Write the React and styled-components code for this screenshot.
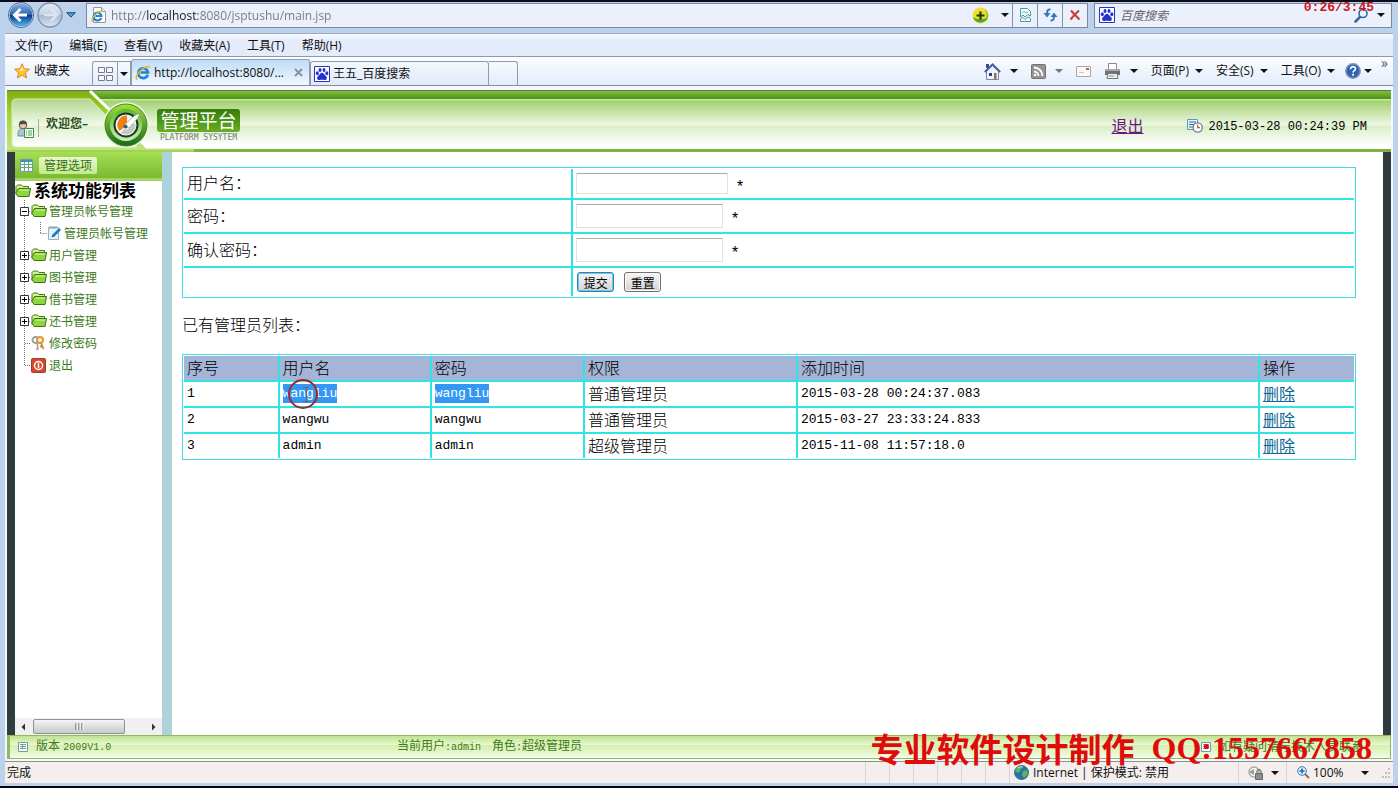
import styled, { createGlobalStyle, css } from "styled-components";

const menus = ["文件(F)", "编辑(E)", "查看(V)", "收藏夹(A)", "工具(T)", "帮助(H)"];
const commands = ["页面(P)", "安全(S)", "工具(O)"];
const folders = ["用户管理", "图书管理", "借书管理", "还书管理"];
const admins = [
  { id: 1, name: "wangliu", role: "普通管理员", added: "2015-03-28 00:24:37.083", selected: true },
  { id: 2, name: "wangwu", role: "普通管理员", added: "2015-03-27 23:33:24.833" },
  { id: 3, name: "admin", role: "超级管理员", added: "2015-11-08 11:57:18.0" },
];

export default function App() {
  return (
    <Window>
      <GlobalStyle />
      <AddressRow>
        <NavButtons>
          <IconButton aria-label="后退">
            <BackIcon />
          </IconButton>
          <IconButton aria-label="前进">
            <ForwardIcon />
          </IconButton>
          <IconButton aria-label="最近浏览的页面">
            <svg width="10" height="6" viewBox="0 0 10 6">
              <path d="M.7.7h8.6L5 5.2z" fill="#4f9bd0" stroke="#174d7e" />
            </svg>
          </IconButton>
        </NavButtons>
        <AddressBox>
          <PageIcon />
          <AddressInput aria-label="地址" defaultValue="http://localhost:8080/jsptushu/main.jsp" />
          <BoxButton aria-label="添加" $width={36}>
            <PlusBallIcon />
          </BoxButton>
          <BoxButton aria-label="地址列表" $width={14}>
            <Caret />
          </BoxButton>
          <BoxButton aria-label="兼容性视图" $width={25} $divided>
            <BrokenPageIcon />
          </BoxButton>
          <BoxButton aria-label="刷新" $width={25} $divided>
            <RefreshIcon />
          </BoxButton>
          <BoxButton aria-label="停止" $width={25} $divided>
            <svg width="12" height="12" viewBox="0 0 12 12">
              <path d="M2 1.5Q5 5 10.5 10.5M10 1.5Q5 6 1.5 10.5" fill="none" stroke="#c8413f" strokeWidth="2.2" />
            </svg>
          </BoxButton>
        </AddressBox>
        <SearchBox>
          <PawIcon />
          <SearchInput aria-label="搜索" placeholder="百度搜索" />
          <BoxButton aria-label="搜索" $width={20}>
            <svg width="15" height="15" viewBox="0 0 15 15">
              <path d="M6 9 1.5 13.5" stroke="#35669f" strokeWidth="2.5" strokeLinecap="round" />
              <circle cx="9" cy="5.5" r="4" fill="#eaf4fc" stroke="#35669f" strokeWidth="1.6" />
            </svg>
          </BoxButton>
          <BoxButton aria-label="搜索选项" $width={20}>
            <Caret />
          </BoxButton>
        </SearchBox>
        <Timer>0:26/3:45</Timer>
      </AddressRow>

      <Chrome>
        <MenuBar>
          {menus.map((menu) => (
            <TextButton key={menu}>{menu}</TextButton>
          ))}
        </MenuBar>
        <TabBar>
          <Favorites>
            <StarIcon />
            收藏夹
          </Favorites>
          <QuickTabs aria-label="快速导航选项卡">
            <svg width="15" height="14" viewBox="0 0 15 14">
              <path d="M.5.5h6v5h-6zM8.5.5h6v5h-6zM.5 8.5h6v5h-6zM8.5 8.5h6v5h-6z" fill="#f6f8fc" stroke="#737b8d" />
            </svg>
          </QuickTabs>
          <TabList aria-label="选项卡列表">
            <Caret />
          </TabList>
          <Tab $active>
            <IeIcon />
            <TabTitle>http://localhost:8080/...</TabTitle>
            <svg width="9" height="9" viewBox="0 0 9 9">
              <path d="m1 1 7 7M8 1 1 8" stroke="#8b8f96" strokeWidth="1.8" />
            </svg>
          </Tab>
          <Tab>
            <PawIcon />
            <TabTitle>王五_百度搜索</TabTitle>
          </Tab>
          <NewTab aria-label="新选项卡" />
          <CommandBar>
            <SplitButton aria-label="主页">
              <HomeIcon />
              <Caret />
            </SplitButton>
            <SplitButton aria-label="源">
              <RssIcon />
              <Caret $muted />
            </SplitButton>
            <IconButton aria-label="阅读邮件">
              <MailIcon />
            </IconButton>
            <SplitButton aria-label="打印">
              <PrinterIcon />
              <Caret />
            </SplitButton>
            {commands.map((command) => (
              <CommandButton key={command}>
                {command}
                <Caret />
              </CommandButton>
            ))}
            <HelpButton aria-label="帮助">
              <HelpIcon />
              <Caret />
            </HelpButton>
            <More aria-label="更多">»</More>
          </CommandBar>
        </TabBar>
      </Chrome>

      <Page>
        <Banner>
          <BannerArt />
          <Welcome>
            <UserIcon />
            <WelcomeText>欢迎您–</WelcomeText>
          </Welcome>
          <Brand>
            <BrandName>管理平台</BrandName>
            <BrandSub>PLATFORM SYSYTEM</BrandSub>
          </Brand>
          <Logout href="#logout">退出</Logout>
          <ClockIcon />
          <Clock>2015-03-28 00:24:39 PM</Clock>
        </Banner>

        <Body>
          <Sidebar>
            <SideHeader>
              <GridIcon />
              <SideBadge>管理选项</SideBadge>
            </SideHeader>
            <Tree>
              <TreeTitle>
                <FolderIcon />
                系统功能列表
              </TreeTitle>
              <TreeRow>
                <Branch toggle="-" />
                <FolderIcon />
                <TreeLink href="#admin">管理员帐号管理</TreeLink>
              </TreeRow>
              <TreeRow>
                <Branch line />
                <svg width="16" height="22" viewBox="0 0 16 22">
                  <path d="M9.5 0v11M9.5 11.5H16" stroke="#777" strokeDasharray="1 1" />
                </svg>
                <NoteIcon />
                <TreeLink href="#accounts">管理员帐号管理</TreeLink>
              </TreeRow>
              {folders.map((folder) => (
                <TreeRow key={folder}>
                  <Branch toggle="+" />
                  <FolderIcon />
                  <TreeLink href="#folder">{folder}</TreeLink>
                </TreeRow>
              ))}
              <TreeRow>
                <Branch />
                <KeysIcon />
                <TreeLink href="#password">修改密码</TreeLink>
              </TreeRow>
              <TreeRow>
                <Branch last />
                <PowerIcon />
                <TreeLink href="#logout">退出</TreeLink>
              </TreeRow>
            </Tree>
            <ScrollBar>
              <svg width="18" height="16" viewBox="0 0 18 16">
                <path d="M10 4.5v7L6.5 8z" fill="#333" />
              </svg>
              <ScrollThumb>
                <svg width="9" height="7" viewBox="0 0 9 7">
                  <path d="M1 0v7M4 0v7M7 0v7" stroke="#555" />
                  <path d="M2 0v7M5 0v7M8 0v7" stroke="#fff" />
                </svg>
              </ScrollThumb>
              <ScrollEnd width="17" height="16" viewBox="0 0 17 16">
                <path d="M7 4.5v7L10.5 8z" fill="#333" />
              </ScrollEnd>
            </ScrollBar>
          </Sidebar>

          <Content>
            <Form onSubmit={(event) => event.preventDefault()}>
              <Frame>
                <Grid>
                  <tbody>
                    <tr>
                      <FormCell $label $height={29}>
                        <label htmlFor="username">用户名：</label>
                      </FormCell>
                      <FormCell>
                        <FieldRow>
                          <TextField id="username" type="text" $width={152} $height={21} />
                          <Star>*</Star>
                        </FieldRow>
                      </FormCell>
                    </tr>
                    <tr>
                      <FormCell $label $height={34}>
                        <label htmlFor="password">密码：</label>
                      </FormCell>
                      <FormCell>
                        <FieldRow>
                          <TextField id="password" type="password" $width={147} $height={24} />
                          <Star>*</Star>
                        </FieldRow>
                      </FormCell>
                    </tr>
                    <tr>
                      <FormCell $label $height={34}>
                        <label htmlFor="confirm">确认密码：</label>
                      </FormCell>
                      <FormCell>
                        <FieldRow>
                          <TextField id="confirm" type="password" $width={147} $height={24} />
                          <Star>*</Star>
                        </FieldRow>
                      </FormCell>
                    </tr>
                    <tr>
                      <FormCell $label $height={30} />
                      <FormCell>
                        <FormButtons>
                          <FormButton type="submit" $primary>
                            提交
                          </FormButton>
                          <FormButton type="reset">重置</FormButton>
                        </FormButtons>
                      </FormCell>
                    </tr>
                  </tbody>
                </Grid>
              </Frame>
            </Form>

            <ListTitle>已有管理员列表：</ListTitle>

            <Frame>
              <Grid>
                <colgroup>
                  <Col $share={8} />
                  <Col $share={13} />
                  <Col $share={13.1} />
                  <Col $share={18.2} />
                  <Col $share={39.5} />
                  <Col $share={8.2} />
                </colgroup>
                <thead>
                  <tr>
                    <HeadCell>序号</HeadCell>
                    <HeadCell>用户名</HeadCell>
                    <HeadCell>密码</HeadCell>
                    <HeadCell>权限</HeadCell>
                    <HeadCell>添加时间</HeadCell>
                    <HeadCell>操作</HeadCell>
                  </tr>
                </thead>
                <tbody>
                  {admins.map((admin) => (
                    <tr key={admin.id}>
                      <Cell $mono>{admin.id}</Cell>
                      <Cell $mono>
                        <Value $selected={admin.selected}>{admin.name}</Value>
                        {admin.selected && <Pointer />}
                      </Cell>
                      <Cell $mono>
                        <Value $selected={admin.selected}>{admin.name}</Value>
                      </Cell>
                      <Cell>{admin.role}</Cell>
                      <Cell $mono>{admin.added}</Cell>
                      <Cell>
                        <DeleteLink href="#delete">删除</DeleteLink>
                      </Cell>
                    </tr>
                  ))}
                </tbody>
              </Grid>
            </Frame>
          </Content>
        </Body>

        <Footer>
          <FooterPart>
            <SheetIcon />
            <span>
              版本 <Small>2009V1.0</Small>
            </span>
          </FooterPart>
          <FooterUser>
            <span>
              当前用户<Small>:admin</Small>
            </span>
            <span>
              角色<Small>:</Small>超级管理员
            </span>
          </FooterUser>
          <FooterPart $end>
            <SheetIcon />
            如有疑问请与技术人员联系
          </FooterPart>
        </Footer>
      </Page>

      <StatusBar>
        <StatusText>完成</StatusText>
        <Pane />
        <Pane />
        <Pane />
        <Pane />
        <Pane />
        <Pane />
        <ZonePane>
          <GlobeIcon />
          Internet | 保护模式: 禁用
        </ZonePane>
        <LockPane>
          <LockIcon />
          <Caret />
        </LockPane>
        <ZoomPane>
          <ZoomIcon />
          <ZoomValue>100%</ZoomValue>
          <Caret />
          <Grip />
        </ZoomPane>
        <Watermark>
          <span>专业软件设计制作</span>
          <WatermarkNumber>QQ:1557667858</WatermarkNumber>
        </Watermark>
      </StatusBar>
    </Window>
  );
}

function BackIcon() {
  return (
    <svg width="26" height="26" viewBox="0 0 26 26">
      <defs>
        <linearGradient id="back" x2="0" y2="1">
          <stop offset="0" stopColor="#8db4e0" />
          <stop offset=".48" stopColor="#2d66b4" />
          <stop offset=".52" stopColor="#0c3c8c" />
          <stop offset="1" stopColor="#4fc0f4" />
        </linearGradient>
      </defs>
      <circle cx="13" cy="13" r="12" fill="url(#back)" stroke="#e9f3fc" />
      <circle cx="13" cy="13" r="12.5" fill="none" stroke="#49658f" />
      <path d="M12.5 7 6.5 13l6 6M7 13h12" fill="none" stroke="#fff" strokeWidth="3" />
    </svg>
  );
}

function ForwardIcon() {
  return (
    <svg width="26" height="26" viewBox="0 0 26 26">
      <defs>
        <linearGradient id="forward" x2="0" y2="1">
          <stop offset="0" stopColor="#e3ebf5" />
          <stop offset=".5" stopColor="#c3d1e2" />
          <stop offset=".52" stopColor="#a6b9d0" />
          <stop offset="1" stopColor="#dde9f5" />
        </linearGradient>
      </defs>
      <circle cx="13" cy="13" r="12" fill="url(#forward)" stroke="#8192ab" strokeWidth="1.3" />
      <path d="m14 7 6 6-6 6M19 13H7" fill="none" stroke="#dbe6f2" strokeWidth="2.5" />
    </svg>
  );
}

function IeMark() {
  return (
    <>
      <path d="M12.8 9.8A4.9 4.9 0 1 1 13 7.5H5.5" fill="none" stroke="#2283cf" strokeWidth="2.7" />
      <path d="M2.5 14.5C-.5 14 2 8 7 4.3c4-3 8-4 7.6-1.3" fill="none" stroke="#e8b52f" strokeWidth="1.5" />
    </>
  );
}

function IeIcon() {
  return (
    <svg width="16" height="16" viewBox="0 0 16 16">
      <IeMark />
    </svg>
  );
}

function PageIcon() {
  return (
    <svg width="16" height="16" viewBox="0 0 16 16">
      <path d="M2.5.5h8l4 4v11h-12z" fill="#fff" stroke="#9a9a8e" />
      <path d="M10.5.5v4h4" fill="#e8e8e0" stroke="#9a9a8e" />
      <g transform="translate(0 3) scale(.8)">
        <IeMark />
      </g>
    </svg>
  );
}

function PlusBallIcon() {
  return (
    <svg width="17" height="17" viewBox="0 0 17 17">
      <circle cx="8.5" cy="8.5" r="8" fill="#f0e02a" />
      <path d="M1 10c2 7 12 8 15 0-4 3-11 3-15 0z" fill="#4ea832" />
      <path d="M13 2c4 4 4 9 1 12 1-4 1-8-1-12z" fill="#76bd3a" />
      <path d="M8.5 4.5v8M4.5 8.5h8" stroke="#243a12" strokeWidth="2.2" />
    </svg>
  );
}

function BrokenPageIcon() {
  return (
    <svg width="13" height="16" viewBox="0 0 13 16">
      <path d="M1.5 10V1.5h7l3 3V9L9 7.5 6 10 4 8z" fill="#f3faf9" stroke="#4d9da2" />
      <path d="M1.5 12 4 10.5l2 2L9 10l2.5 1.5v3h-10z" fill="#f3faf9" stroke="#4d9da2" />
      <path d="m3 6 2-2 2 2 2-1" fill="none" stroke="#75b9b4" />
    </svg>
  );
}

function RefreshIcon() {
  return (
    <svg width="15" height="14" viewBox="0 0 15 14">
      <path d="M.5 5h7L4 9.5zM7.5 9h7L11 4.5z" fill="#3479bd" />
      <path d="M7.5 1.5C4.500 1 4 3 4 6M7.5 12.5c3 .5 3.5-1.5 3.5-4.5" fill="none" stroke="#3479bd" strokeWidth="2" />
    </svg>
  );
}

function PawIcon() {
  return (
    <svg width="16" height="16" viewBox="0 0 16 16">
      <path d="M.5.5h15v15H.5z" fill="#fff" stroke="#2632c8" />
      <g fill="#2632d0">
        <ellipse cx="3.3" cy="7.3" rx="1.5" ry="2" />
        <ellipse cx="6" cy="4" rx="1.5" ry="2.1" />
        <ellipse cx="10" cy="4" rx="1.5" ry="2.1" />
        <ellipse cx="12.8" cy="7.3" rx="1.5" ry="2" />
        <path d="M8 6.8c1.6 0 2 1.5 3.4 2.7 2.7 2.3 1.2 4.9-1 4.5-1.7-.3-3.2-.3-4.8 0-2.2.4-3.7-2.2-1-4.5C6 8.3 6.4 6.8 8 6.8z" />
      </g>
    </svg>
  );
}

function StarIcon() {
  return (
    <svg width="16" height="16" viewBox="0 0 16 16">
      <path d="m8 .8 2.1 4.9 5.3.5-4 3.5 1.2 5.2L8 12.2l-4.6 2.7 1.2-5.2-4-3.5 5.3-.5z" fill="#fcc52c" stroke="#d98a1a" />
      <path d="m8 3 1.3 3.5 3.5.3-7.5 1.4z" fill="#fdeb9c" />
    </svg>
  );
}

function HomeIcon() {
  return (
    <svg width="17" height="17" viewBox="0 0 17 17">
      <path d="M2.5 8v8.5h12V8l-6-5.5z" fill="#f2f2f6" stroke="#7b89a6" />
      <path d="M2 1h3v4H2z" fill="#3a4a8e" />
      <path d="m.8 9 7.7-7.5L16.2 9" fill="none" stroke="#4462a0" strokeWidth="2" />
      <path d="M5 10h3v3H5z" fill="#2b3c92" />
      <path d="M10 10h2.5v6H10z" fill="#8d6f62" />
    </svg>
  );
}

function RssIcon() {
  return (
    <svg width="15" height="15" viewBox="0 0 15 15">
      <rect x=".5" y=".5" width="14" height="14" rx="1" fill="#949494" stroke="#737373" />
      <path d="M3 7.5A4.5 4.5 0 0 1 7.5 12M3 3.5A8.5 8.5 0 0 1 11.5 12" fill="none" stroke="#fff" strokeWidth="1.8" />
      <circle cx="4" cy="11" r="1.3" fill="#fff" />
    </svg>
  );
}

function MailIcon() {
  return (
    <svg width="15" height="11" viewBox="0 0 15 11">
      <path d="M.5.5h14v10H.5z" fill="#fbfaf8" stroke="#a8a8ac" />
      <path d="M10 3h3" stroke="#cf5a48" strokeWidth="2" />
      <path d="M3 6.5h5" stroke="#c9c9cc" />
    </svg>
  );
}

function PrinterIcon() {
  return (
    <svg width="17" height="16" viewBox="0 0 17 16">
      <path d="M4.5.5h8v6h-8z" fill="#fff" stroke="#8b8b8b" />
      <path d="M1 6h15v6H1z" fill="#6d7075" />
      <path d="M1 6h15v2H1z" fill="#a4a7ab" />
      <path d="M4 10.5h9l1 5H3z" fill="#e9f2ec" stroke="#777" />
      <path d="M5 13h5" stroke="#5ea0c4" />
    </svg>
  );
}

function HelpIcon() {
  return (
    <svg width="16" height="16" viewBox="0 0 16 16">
      <circle cx="8" cy="8" r="7.2" fill="#2e62b4" stroke="#8295b4" strokeWidth="1.5" />
      <path d="M5.5 6.2C5.5 2.8 10.7 3 10.5 6c-.1 1.7-2.4 1.7-2.4 3.4M8.1 10.8v2" fill="none" stroke="#fff" strokeWidth="1.7" />
    </svg>
  );
}

function BannerArt() {
  return (
    <Art width="190" height="62" viewBox="0 0 190 62">
      <defs>
        <linearGradient id="lime" x2="0" y2="1">
          <stop offset="0" stopColor="#7fae0c" />
          <stop offset=".4" stopColor="#a4d636" />
          <stop offset="1" stopColor="#c2e584" />
        </linearGradient>
        <linearGradient id="card" x2="0" y2="1">
          <stop offset="0" stopColor="#b1d68e" />
          <stop offset=".55" stopColor="#f3faeb" />
          <stop offset=".56" stopColor="#e0f1ce" />
          <stop offset="1" stopColor="#fff" />
        </linearGradient>
        <linearGradient id="ring" x2="0" y2="1">
          <stop offset="0" stopColor="#a4e03a" />
          <stop offset="1" stopColor="#17691f" />
        </linearGradient>
        <linearGradient id="dial" x2="0" y2="1">
          <stop offset="0" stopColor="#5eb52c" />
          <stop offset="1" stopColor="#d3eeb0" />
        </linearGradient>
      </defs>
      <path d="M0 1h82l34 33 23 24h48v4H0z" fill="url(#lime)" />
      <path d="M9 9h74l47 48H9q-4 0-4-4V13q0-4 4-4z" fill="url(#card)" stroke="#d6edb2" />
      <path d="m83 1 29 28M133 50l7 7h47" fill="none" stroke="#fff" strokeWidth="3" />
      <path d="M0 61h187" stroke="#86bd38" />
      <circle cx="119" cy="35" r="23" fill="#edf6df" />
      <circle cx="119" cy="35" r="21" fill="url(#ring)" stroke="#3c8a20" />
      <circle cx="119" cy="35" r="16" fill="url(#dial)" />
      <circle cx="119" cy="35" r="12.5" fill="#123c2c" />
      <circle cx="119" cy="35" r="10.5" fill="#fbfaf2" />
      <path d="M120 35v-9.5a9.5 9.5 0 0 0-7.5 15.500z" fill="#f57c14" />
      <path d="M114 43a9.500 9.500 0 0 0 14.500-9h-4.500a5 5 0 0 1-7 5z" fill="#c4c9c6" />
      <path d="m116 36 11-10 6-3-2 5-9 10z" fill="#fff" stroke="#567566" strokeWidth=".5" />
      <circle cx="118.5" cy="36.5" r="2" fill="#33655a" />
    </Art>
  );
}

function UserIcon() {
  return (
    <svg width="23" height="20" viewBox="0 0 23 20">
      <path d="M1 15q0-6 6-6t6 6v2H1z" fill="#a9c6d8" stroke="#6d8fa3" />
      <circle cx="6" cy="6" r="3.8" fill="#efc79e" stroke="#6e5a49" />
      <path d="M2 6q0-4.5 4-4.5T10 6Q7 4 2 6z" fill="#4b4b4b" />
      <path d="M7.5 9.5h9v9h-9z" fill="#f6fff2" stroke="#3c8b45" />
      <path d="M9 12h1M11 12h4M9 14h1M11 14h4M9 16h1M11 16h4" stroke="#55a25b" />
      <path d="M21.5 0v18" stroke="#96b781" />
    </svg>
  );
}

function ClockIcon() {
  return (
    <svg width="16" height="15" viewBox="0 0 16 15">
      <path d="M.5 1.5h10v10H.5z" fill="#e4f3fa" stroke="#5b9cb5" />
      <path d="M2 4h7M2 6.5h5M2 9h4" stroke="#35708e" />
      <circle cx="10.7" cy="9.5" r="4.6" fill="#fff" stroke="#68819d" strokeWidth="1.3" />
      <path d="M10.7 6.5v3.2H13" fill="none" stroke="#c6543f" strokeWidth="1.2" />
    </svg>
  );
}

function GridIcon() {
  return (
    <svg width="13" height="13" viewBox="0 0 13 13">
      <path d="M.5.5h12v12H.5z" fill="#f4fcff" stroke="#6c9cab" />
      <path d="M1 2h11" stroke="#3e99a5" strokeWidth="2" />
      <path d="M1 5.5h11M1 8.5h11M4.5 3v9M8.5 3v9" stroke="#6ea67c" />
    </svg>
  );
}

function SheetIcon() {
  return (
    <svg width="10" height="10" viewBox="0 0 10 10">
      <path d="M.5.5h9v9h-9z" fill="#fdfff8" stroke="#6f9bb0" />
      <path d="M2 2.5h6M2 4.5h6M2 6.5h6M4.5 3v4" stroke="#6ea67c" />
    </svg>
  );
}

function FolderIcon() {
  return (
    <svg width="16" height="14" viewBox="0 0 16 14">
      <path d="M1 10.5v-8L2.5 1h4L8 2.5h5.5v3" fill="#d7f08f" stroke="#3f7a17" />
      <path d="M3.5 4.5h12L14 12.5H3L.8 9z" fill="#8ed63c" stroke="#3a7515" />
      <path d="M4.5 6H14" stroke="#d9f6a5" />
    </svg>
  );
}

function Branch({ toggle, line, last }) {
  return (
    <svg width="11" height="22" viewBox="0 0 11 22">
      <path d={last ? "M4.5 0v11" : "M4.5 0v22"} stroke="#777" strokeDasharray="1 1" />
      {!line && <path d="M5 11.5h6" stroke="#777" strokeDasharray="1 1" />}
      {toggle && <path d="M.5 7.5h8v8h-8z" fill="#fff" stroke="#333" />}
      {toggle && <path d="M2 11.5h5" stroke="#000" />}
      {toggle === "+" && <path d="M4.5 9v5" stroke="#000" />}
    </svg>
  );
}

function NoteIcon() {
  return (
    <svg width="15" height="16" viewBox="0 0 15 16">
      <path d="M1.5 2.5h10v12h-10z" fill="#e4f4fb" stroke="#8cb4c9" />
      <path d="M3 1v3M5 1v3M7 1v3M9 1v3" stroke="#8a9ba6" />
      <path d="m6 11 7-7" stroke="#2676bd" strokeWidth="2.6" />
      <path d="m4.5 12.5 1-2.5 1.6 1.5z" fill="#444" />
    </svg>
  );
}

function KeysIcon() {
  return (
    <svg width="16" height="16" viewBox="0 0 16 16">
      <circle cx="4.5" cy="5" r="3" fill="none" stroke="#9d9d9d" strokeWidth="1.8" />
      <path d="m6 7 1 7H5" fill="none" stroke="#a3a3a3" strokeWidth="1.6" />
      <circle cx="9" cy="5" r="3" fill="#fff1cf" stroke="#dc9a3c" strokeWidth="2" />
      <path d="m10 8 2.5 6M11 11l-2 1" stroke="#c7852e" strokeWidth="1.7" />
    </svg>
  );
}

function PowerIcon() {
  return (
    <svg width="16" height="15" viewBox="0 0 16 15">
      <rect x=".5" y=".5" width="14" height="14" rx="1" fill="#d2492b" stroke="#a73a22" />
      <circle cx="7.5" cy="7.5" r="4" fill="none" stroke="#fff" strokeWidth="1.5" />
      <path d="M7.5 5v5" stroke="#fff" strokeWidth="1.5" />
    </svg>
  );
}

function Pointer() {
  return (
    <PointerArt width="32" height="32" viewBox="0 0 32 32">
      <circle cx="16" cy="16" r="14" fill="none" stroke="#a3242c" strokeWidth="2" />
      <path d="M16 9.5h6M19.5 10v13M16 23.5h6" fill="none" stroke="#5d6a72" />
    </PointerArt>
  );
}

function GlobeIcon() {
  return (
    <svg width="15" height="15" viewBox="0 0 15 15">
      <circle cx="7.5" cy="7.5" r="7" fill="#2672ad" stroke="#3d6f8f" />
      <path d="M3 2q4-2 5 1L6 6 4 8 1 6zM9 6l4-1 1 4-4 4-2-3z" fill="#61b35c" />
      <path d="M4 3q2-2 5-1" stroke="#bfe1ed" fill="none" />
    </svg>
  );
}

function LockIcon() {
  return (
    <svg width="15" height="14" viewBox="0 0 15 14">
      <circle cx="6" cy="6" r="5" fill="#f5f4f4" stroke="#aaa" strokeWidth="1.5" />
      <path d="m1 6 5-3v6z" fill="#999" />
      <path d="M7.5 7.5h7v6h-7z" fill="#8d8d8d" stroke="#696969" />
      <path d="M9 7V5q2-3 4 0v2" fill="none" stroke="#777" strokeWidth="1.3" />
    </svg>
  );
}

function ZoomIcon() {
  return (
    <svg width="13" height="13" viewBox="0 0 13 13">
      <path d="m8 8 4 4" stroke="#8d6a49" strokeWidth="2" />
      <circle cx="5" cy="5" r="4.3" fill="#e4f4fe" stroke="#3c76b1" />
      <path d="M5 2.5v5M2.5 5h5" stroke="#1769b5" strokeWidth="1.6" />
    </svg>
  );
}

function Grip() {
  return (
    <svg width="10" height="12" viewBox="0 0 10 12">
      <path d="M7 1h2v2H7zM4 5h2v2H4zM7 5h2v2H7zM1 9h2v2H1zM4 9h2v2H4zM7 9h2v2H7z" fill="#c3c0c3" />
    </svg>
  );
}

const GlobalStyle = createGlobalStyle`
  * {
    box-sizing: border-box;
  }
  body {
    margin: 0;
  }
  button {
    padding: 0;
    border: 0;
    background: none;
    font: inherit;
    color: inherit;
  }
  svg {
    display: block;
    flex: none;
  }
`;

const uiFont = css`
  font-family: "Open Sans", "Noto Sans CJK SC", sans-serif;
  font-size: 12px;
  line-height: 16px;
`;

const monoFont = css`
  font-family: "Liberation Mono", "Noto Sans CJK SC", monospace;
`;

const Window = styled.div`
  ${uiFont}
  display: flex;
  flex-direction: column;
  min-height: 100vh;
  padding: 0 5px 3px;
  border-top: 2px solid #0c0c18;
  border-bottom: 2px solid #05060c;
  background: #bcd1ec;
  color: #111;
  white-space: nowrap;
`;

const AddressRow = styled.div`
  position: relative;
  display: flex;
  align-items: center;
  height: 31px;
  padding: 0 1px 5px 3px;
`;

const NavButtons = styled.div`
  display: flex;
  align-items: center;
  gap: 3px;
  width: 78px;
`;

const IconButton = styled.button`
  display: flex;
  align-items: center;
`;

const fieldBox = css`
  display: flex;
  align-items: center;
  height: 25px;
  border: 1px solid #7c88a0;
  background: #eaf1fc;
`;

const AddressBox = styled.div`
  ${fieldBox}
  flex: 1;
  padding-left: 4px;
`;

const AddressInput = styled.input`
  flex: 1;
  min-width: 0;
  padding: 2px 4px 0;
  border: 0;
  font: inherit;
  color: transparent;
  /* only the host part of the address is dark */
  background: linear-gradient(to right, #77797d 40px, #17191d 40px 91px, #77797d 91px);
  background-clip: text;
  -webkit-background-clip: text;
`;

const BoxButton = styled.button`
  display: flex;
  align-items: center;
  justify-content: center;
  width: ${(props) => props.$width}px;
  height: 23px;
  border-left: ${(props) => (props.$divided ? "1px solid #8792a8" : "0")};
`;

const SearchBox = styled.div`
  ${fieldBox}
  width: 298px;
  margin-left: 6px;
  padding-left: 4px;
`;

const SearchInput = styled.input`
  flex: 1;
  min-width: 0;
  padding: 1px 5px 0;
  border: 0;
  background: none;
  font: inherit;
  font-style: italic;

  &::placeholder {
    color: #666;
  }
`;

const Caret = styled.span`
  width: 0;
  height: 0;
  border: 4px solid transparent;
  border-top-color: ${(props) => (props.$muted ? "#777" : "#111")};
  border-bottom: 0;
`;

const Timer = styled.div`
  ${monoFont}
  position: absolute;
  top: -2px;
  right: 19px;
  font-size: 13px;
  font-weight: bold;
  color: #d0141c;
`;

const Chrome = styled.div`
  border-top: 1px solid #98a9c4;
`;

const MenuBar = styled.div`
  display: flex;
  align-items: center;
  gap: 17px;
  height: 23px;
  padding: 2px 0 0 10px;
  border-bottom: 1px solid #8f98a9;
  background: linear-gradient(#fafcff, #e4ecfb 30%);
`;

const TextButton = styled.button`
  display: block;
`;

const TabBar = styled.div`
  display: flex;
  align-items: flex-end;
  height: 29px;
  border-bottom: 1px solid #858c9a;
  background: linear-gradient(#fbfdff, #e4ecfa);
`;

const Favorites = styled.button`
  display: flex;
  align-items: center;
  gap: 4px;
  width: 87px;
  height: 28px;
  padding-left: 9px;
`;

const tabEdge = css`
  display: flex;
  align-items: center;
  height: 24px;
  border: 1px solid #929bad;
  border-bottom: 0;
`;

const QuickTabs = styled.button`
  ${tabEdge}
  justify-content: center;
  width: 25px;
  border-right: 0;
  border-radius: 3px 0 0 0;
`;

const TabList = styled.button`
  ${tabEdge}
  justify-content: center;
  width: 14px;
`;

const Tab = styled.button`
  ${tabEdge}
  gap: 3px;
  width: 179px;
  height: ${(props) => (props.$active ? 26 : 24)}px;
  padding: 0 6px 0 3px;
  border-radius: 3px 3px 0 0;
  background: ${(props) =>
    props.$active ? "linear-gradient(#bedcf8, #f2f8ff)" : "linear-gradient(#f3f7fd, #dfe9fa)"};
`;

const TabTitle = styled.span`
  flex: 1;
  padding-top: 1px;
  text-align: left;
`;

const NewTab = styled.button`
  ${tabEdge}
  width: 29px;
  border-left: 0;
  border-radius: 0 3px 0 0;
`;

const CommandBar = styled.div`
  display: flex;
  align-items: center;
  gap: 13px;
  height: 28px;
  margin-left: auto;
`;

const SplitButton = styled.button`
  display: flex;
  align-items: center;
  gap: 9px;
`;

const CommandButton = styled.button`
  display: flex;
  align-items: center;
  gap: 6px;
`;

const HelpButton = styled(CommandButton)`
  gap: 3px;
  margin-left: -3px;
`;

const More = styled.button`
  align-self: flex-start;
  margin-left: -4px;
  padding-right: 5px;
  font-size: 14px;
  line-height: 12px;
  color: #4b5a78;
`;

const Page = styled.div`
  display: flex;
  flex: 1;
  flex-direction: column;
  padding: 4px 2px 2px;
  border-bottom: 1px solid #8b8f96;
  background: #f4f7fb;
`;

const Banner = styled.header`
  position: relative;
  display: flex;
  align-items: center;
  height: 62px;
  padding: 10px 24px 0 10px;
  border-top: 1px solid #61745a;
  border-bottom: 3px double #86b04a;
  background:
    linear-gradient(#82bd3c, #4c9214 8px, #d9edc6 8px, #a3d172 10px, #eef8e4 34px, #d9eec6 35px, #fff 54px);
`;

const Art = styled.svg`
  position: absolute;
  top: -1px;
  left: 0;
`;

const Welcome = styled.div`
  position: relative;
  display: flex;
  align-items: center;
  gap: 6px;
  width: 140px;
  padding-top: 8px;
`;

const WelcomeText = styled.span`
  padding-bottom: 10px;
  font-weight: bold;
  color: #2b4d1c;
`;

const Brand = styled.div`
  position: relative;
  width: 83px;
  padding-top: 3px;
`;

const BrandName = styled.div`
  height: 23px;
  border-radius: 3px;
  background: linear-gradient(#347d08, #67ad24);
  font-family: "Noto Sans CJK SC", sans-serif;
  font-size: 19px;
  line-height: 22px;
  text-align: center;
  color: #fff;
`;

const BrandSub = styled.div`
  font-family: "DejaVu Sans Mono", monospace;
  font-size: 8px;
  line-height: 12px;
  text-align: center;
  color: #777;
`;

const Logout = styled.a`
  margin: 0 43px 0 auto;
  font-family: "Noto Sans CJK SC", sans-serif;
  font-size: 16px;
  line-height: 20px;
  color: #6c1780;
`;

const Clock = styled.span`
  ${monoFont}
  padding: 3px 0 0 6px;
  font-size: 12px;
  color: #000;
`;

const Body = styled.div`
  display: flex;
  flex: 1;
  border: solid #303b40;
  border-width: 0 8px;
  background: #fff;
`;

const Sidebar = styled.nav`
  display: flex;
  flex-direction: column;
  width: 157px;
  border-right: 10px solid #add2da;
`;

const SideHeader = styled.div`
  display: flex;
  align-items: center;
  gap: 6px;
  height: 29px;
  padding: 0 5px;
  border-bottom: 3px double #a9cb6b;
  background: linear-gradient(#a5df52, #79b932);
`;

const SideBadge = styled.h2`
  margin: 0;
  padding: 0 5px;
  border-radius: 2px;
  background: linear-gradient(#e8f8cf, #c4e98b);
  font-size: 12px;
  font-weight: normal;
  line-height: 17px;
  color: #36701a;
`;

const Tree = styled.div`
  flex: 1;
`;

const TreeTitle = styled.div`
  display: flex;
  align-items: center;
  gap: 3px;
  height: 19px;
  font-size: 17px;
  font-weight: bold;
  color: #000;
`;

const TreeRow = styled.div`
  display: flex;
  align-items: center;
  height: 22px;
  padding-left: 5px;
`;

const TreeLink = styled.a`
  padding: 1px 0 0 2px;
  color: #3d7a1c;
  text-decoration: none;
`;

const ScrollBar = styled.div`
  display: flex;
  align-items: center;
  height: 17px;
  background: #f0f0f1;
`;

const ScrollThumb = styled.div`
  display: flex;
  align-items: center;
  justify-content: center;
  width: 92px;
  height: 15px;
  border: 1px solid #909294;
  border-radius: 2px;
  background: linear-gradient(#f5f5f5, #dedede 50%, #c9c9cb);
`;

const ScrollEnd = styled.svg`
  margin-left: auto;
`;

const Content = styled.main`
  flex: 1;
  padding: 15px 27px 0 10px;
  font-family: "Noto Sans CJK SC", sans-serif;
  font-size: 16px;
  font-weight: 300;
  line-height: 22px;
  color: #000;
`;

const Form = styled.form`
  margin: 0;
`;

const Frame = styled.div`
  padding: 1px;
  border: 1px solid #3fdede;
`;

const Grid = styled.table`
  width: 100%;
  border-spacing: 0;
  table-layout: fixed;

  td + td,
  th + th {
    border-left: 2px solid #2ee4e4;
  }
  tr + tr td,
  thead + tbody td {
    border-top: 2px solid #2ee4e4;
  }
`;

const Col = styled.col`
  width: ${(props) => props.$share}%;
`;

const FormCell = styled.td`
  width: ${(props) => (props.$label ? "33.1%" : "auto")};
  height: ${(props) => props.$height}px;
  padding: ${(props) => (props.$label ? "0 3px 3px" : "0 3px")};
`;

const FieldRow = styled.div`
  display: flex;
  align-items: center;
`;

const TextField = styled.input`
  width: ${(props) => props.$width}px;
  height: ${(props) => props.$height}px;
  border: 1px solid #dfe1e5;
  border-top-color: #a9abb0;
  border-radius: 1px;
`;

const Star = styled.span`
  ${monoFont}
  padding: 8px 0 0 7px;
  font-size: 16px;
  font-weight: normal;
  line-height: 14px;
`;

const FormButtons = styled.div`
  display: flex;
  gap: 10px;
  padding-left: 1px;
`;

const FormButton = styled.button`
  width: 37px;
  height: 20px;
  border: 1px solid ${(props) => (props.$primary ? "#3182ab" : "#707070")};
  border-radius: 3px;
  background: linear-gradient(#f4f4f4, #e6e6e6 50%, #d2d2d2);
  box-shadow: inset 0 0 0 1px ${(props) => (props.$primary ? "#62cdf2" : "#fafafa")};
  font-size: 12px;
  font-weight: normal;
  line-height: 15px;
`;

const ListTitle = styled.p`
  margin: 15px 0 19px;
`;

const HeadCell = styled.th`
  height: 24px;
  padding: 0 3px 3px;
  line-height: 20px;
  background: #a4b5d7;
  font-weight: 300;
  text-align: left;
`;

const Cell = styled.td`
  position: relative;
  height: 26px;
  padding: 0 3px 3px;
  line-height: 20px;
  ${(props) =>
    props.$mono &&
    css`
      ${monoFont}
      padding-bottom: 0;
      font-size: 13px;
      font-weight: normal;
    `}
`;

const Value = styled.span`
  ${(props) =>
    props.$selected &&
    css`
      padding: 2px 0;
      background: #3497f3;
      color: #fff;
    `}
`;

const PointerArt = styled.svg`
  position: absolute;
  top: -4px;
  left: 7px;
  z-index: 1;
`;

const DeleteLink = styled.a`
  font-weight: normal;
  color: #0b6794;
`;

const Footer = styled.footer`
  display: grid;
  grid-template-columns: 1fr auto 1fr;
  align-items: center;
  height: 24px;
  padding: 0 27px 0 8px;
  border: 1px solid #8eb95c;
  border-left-width: 3px;
  background: linear-gradient(#bfe290, #e9f8d2 40%, #d4efac 42%, #f3fce5);
  color: #3f7a1f;
`;

const FooterPart = styled.div`
  display: flex;
  align-items: center;
  gap: 8px;
  ${(props) => props.$end && "justify-self: end;"}
`;

const FooterUser = styled.div`
  display: flex;
  gap: 11px;
  margin-right: 402px;
`;

const Small = styled.span`
  ${monoFont}
  font-size: 10px;
`;

const StatusBar = styled.div`
  position: relative;
  display: flex;
  height: 21px;
  background: #f4eeed;
  line-height: 22px;
`;

const StatusText = styled.span`
  flex: 1;
  padding-left: 2px;
`;

const Pane = styled.div`
  width: 24px;
  border-left: 1px solid #dcd5d6;
`;

const ZonePane = styled(Pane)`
  display: flex;
  align-items: center;
  gap: 4px;
  width: 229px;
  padding-left: 4px;
`;

const LockPane = styled(Pane)`
  display: flex;
  align-items: center;
  gap: 8px;
  width: 48px;
  padding-left: 9px;
`;

const ZoomPane = styled(Pane)`
  display: flex;
  align-items: center;
  width: 107px;
  padding: 0 2px 0 10px;

  ${Caret} {
    margin-right: auto;
  }
`;

const ZoomValue = styled.span`
  width: 51px;
  padding-left: 3px;
`;

const Watermark = styled.div`
  position: absolute;
  right: 21px;
  bottom: 15px;
  display: flex;
  gap: 17px;
  font-family: "Noto Sans CJK SC", sans-serif;
  font-size: 33px;
  font-weight: bold;
  line-height: 40px;
  color: #e00b0b;
`;

const WatermarkNumber = styled.span`
  font-family: "Liberation Serif", serif;
  font-size: 32px;
`;
